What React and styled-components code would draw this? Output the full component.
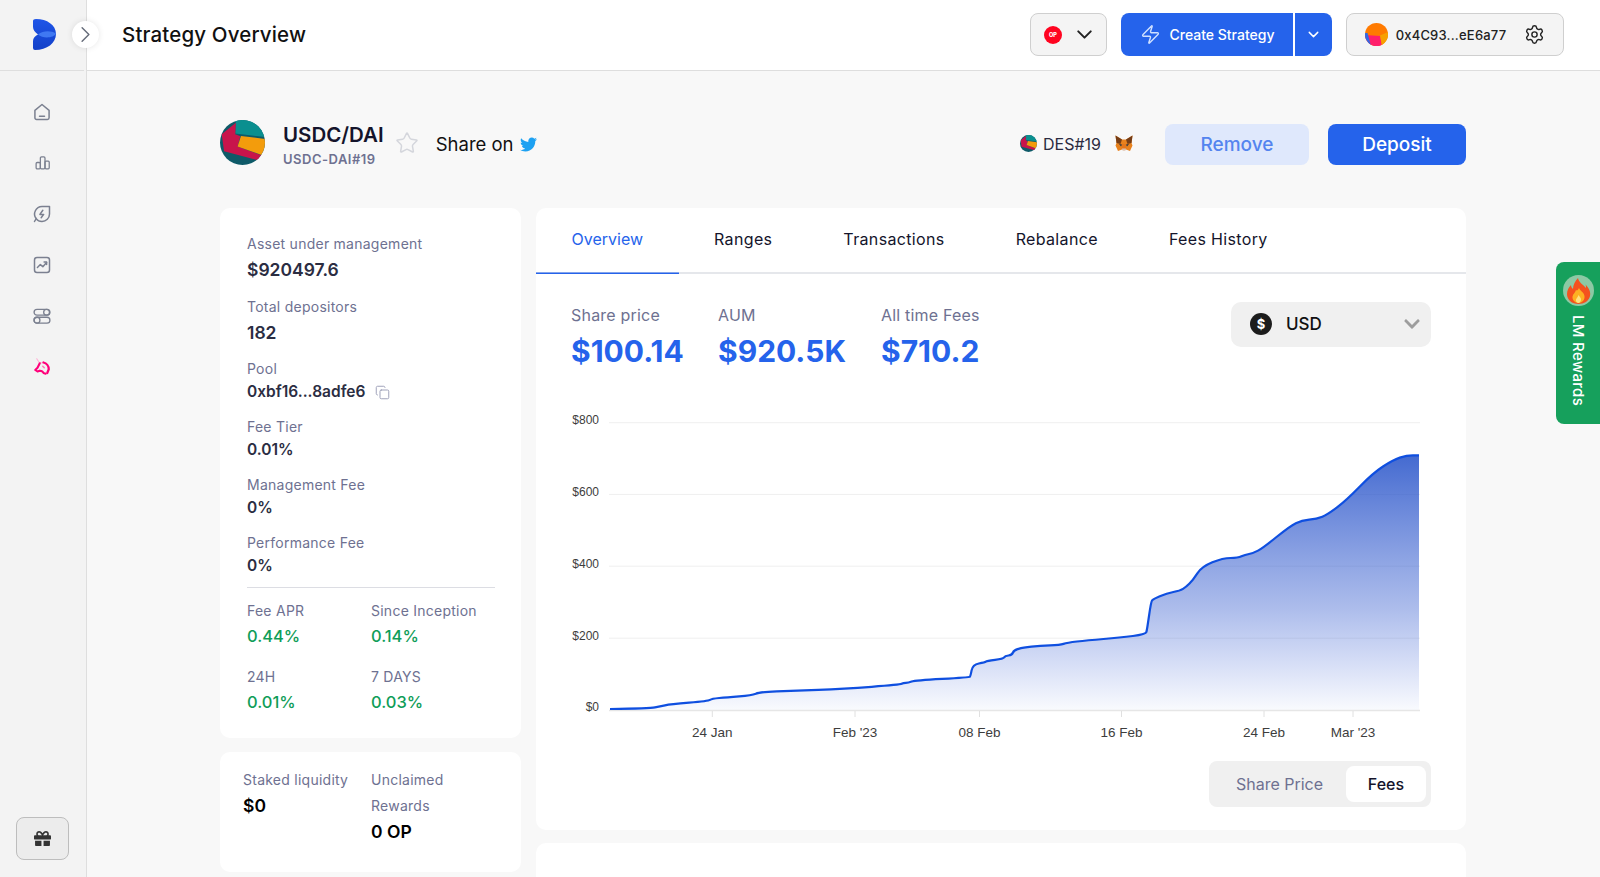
import React from 'react';
import styled, { createGlobalStyle } from 'styled-components';
import { ChevronDown, ChevronRight, Copy, Settings, Star, Zap } from 'lucide-react';
import { FaChevronDown, FaGift, FaTwitter } from 'react-icons/fa';

const GlobalStyle = createGlobalStyle`
  html, body { margin: 0; padding: 0; height: 100%; overflow: hidden; }
  body { font-family: Inter, "Noto Sans", sans-serif; background: #f8f8f8; color: #14142b; }
  * { box-sizing: border-box; }
`;

const Shell = styled.div`
  display: flex;
  height: 877px;
  overflow: hidden;
`;

const Sidebar = styled.aside`
  width: 87px;
  flex: none;
  display: flex;
  flex-direction: column;
  align-items: center;
  background: #f3f3f3;
  border-right: 1px solid #dedede;
  padding: 0 2px 17px 0;
`;

const LogoBox = styled.div`
  width: 100%;
  height: 71px;
  flex: none;
  display: flex;
  align-items: center;
  padding: 0 0 1px 33px;
  border-bottom: 1px solid #dedede;
`;

const Nav = styled.nav`
  display: flex;
  flex-direction: column;
  padding-top: 15px;
  flex: 1;
`;

const NavItem = styled.a`
  width: 40px;
  height: 51px;
  display: flex;
  align-items: center;
  justify-content: center;
  color: #7b8090;
`;

const GiftButton = styled.button`
  width: 53px;
  height: 43px;
  display: flex;
  align-items: center;
  justify-content: center;
  background: #ececec;
  border: 1px solid #bdbdbd;
  border-radius: 8px;
  color: #333;
  font-size: 17px;
  padding: 0;
`;

const Main = styled.div`
  flex: 1;
  min-width: 0;
  display: flex;
  flex-direction: column;
`;

const Header = styled.header`
  position: relative;
  height: 71px;
  flex: none;
  display: flex;
  align-items: center;
  background: #fff;
  border-bottom: 1px solid #dedede;
  padding: 0 36px 1px 36px;
  gap: 14px;
`;

const Collapse = styled.button`
  position: absolute;
  left: -15px;
  top: 21px;
  width: 27px;
  height: 27px;
  display: flex;
  align-items: center;
  justify-content: center;
  border: 0;
  padding: 0;
  border-radius: 50%;
  background: #fff;
  color: #666c7a;
  box-shadow: 0 0 6px rgba(0, 0, 0, 0.1);
`;

const PageTitle = styled.h1`
  margin: 0 auto 0 -1px;
  font-size: 20.5px;
  font-weight: 500;
  color: #111;
  letter-spacing: 0.15px;
`;

const GreyButton = styled.div`
  height: 43px;
  width: ${p => p.$width}px;
  display: flex;
  align-items: center;
  justify-content: space-between;
  padding: ${p => p.$padding};
  background: #f4f4f4;
  border: 1.5px solid #cfcfcf;
  border-radius: 8px;
  font-size: 13px;
  font-weight: 500;
  color: #222;
  letter-spacing: 0.2px;
`;

const WalletText = styled.span`
  margin-right: 10px;
`;

const SplitButton = styled.div`
  display: flex;
  gap: 2px;
`;

const BlueButton = styled.button`
  height: 43px;
  width: ${p => p.$width}px;
  display: flex;
  align-items: center;
  justify-content: center;
  gap: 9px;
  border: 0;
  padding: 0;
  background: #2563eb;
  color: #fff;
  font-family: inherit;
  font-size: 14px;
  font-weight: 500;
  border-radius: ${p => p.$radius};
`;

const OpBadge = styled.span`
  width: 18px;
  height: 18px;
  border-radius: 50%;
  background: #ff0420;
  color: #fff;
  font-size: 5.5px;
  font-weight: 800;
  display: flex;
  align-items: center;
  justify-content: center;
`;

const Content = styled.main`
  flex: 1;
  min-height: 0;
  padding: 48px 134px 0 133px;
`;

const TitleRow = styled.section`
  height: 46px;
  margin-bottom: 43px;
  display: flex;
  align-items: center;
`;

const PairName = styled.div`
  margin-left: 18px;
  display: flex;
  flex-direction: column;
  padding-top: 4px;
`;

const PairTitle = styled.div`
  font-size: 20.5px;
  font-weight: 600;
  line-height: 30px;
  color: #14142b;
`;

const PairSub = styled.div`
  font-size: 13px;
  font-weight: 600;
  line-height: 18px;
  letter-spacing: 0.5px;
  color: #6e7191;
`;

const ShareText = styled.span`
  display: flex;
  align-items: center;
  gap: 6px;
  margin: 4px auto 0 17px;
  font-size: 18.5px;
  color: #111;
  svg { color: #1da1f2; }
`;

const FavStar = styled.span`
  display: flex;
  margin: 2px 0 0 11px;
  color: #d4d6dc;
`;

const VaultTag = styled.span`
  display: flex;
  align-items: center;
  gap: 6px;
  margin: 3px 32px 0 0;
  font-size: 16px;
  color: #2b2b40;
`;

const FoxSlot = styled.span`
  display: flex;
  margin-left: 8px;
`;

const ActionButton = styled.button`
  width: ${p => p.$width}px;
  height: 41px;
  margin: 4px 0 0 ${p => p.$left || 0}px;
  border: 0;
  border-radius: 8px;
  font-family: inherit;
  font-size: 19px;
  font-weight: 500;
  background: ${p => (p.$primary ? '#2563eb' : '#dfe8fc')};
  color: ${p => (p.$primary ? '#fff' : '#5484ef')};
`;

const Columns = styled.div`
  display: grid;
  grid-template-columns: 301px 930px;
  column-gap: 15px;
  align-items: start;
`;

const Stack = styled.div`
  display: flex;
  flex-direction: column;
  gap: ${p => p.$gap}px;
`;

const Card = styled.div`
  background: #fff;
  border-radius: 10px;
`;

const InfoCard = styled(Card)`
  height: 530px;
  padding: 26px 26px 0 27px;
`;

const Stat = styled.div`
  margin-bottom: ${p => p.$after}px;
`;

const Label = styled.div`
  font-size: 14px;
  line-height: 20px;
  color: #6e7191;
  letter-spacing: 0.25px;
`;

const Value = styled.div`
  display: flex;
  align-items: center;
  gap: 10px;
  font-size: ${p => p.$size}px;
  line-height: ${p => p.$line}px;
  font-weight: 600;
  color: #2b2d42;
  svg { color: #9a9db5; }
`;

const Divider = styled.hr`
  margin: 9px 0 13px;
  border: 0;
  border-top: 1px solid #dcdde3;
`;

const ReturnGrid = styled.div`
  display: grid;
  grid-template-columns: 124px 1fr;
  row-gap: 16px;
`;

const GreenValue = styled.div`
  font-size: 16.5px;
  line-height: 30px;
  font-weight: 500;
  color: #0f9d58;
`;

const StakeCard = styled(Card)`
  height: 120px;
  padding: 15px 0 0 23px;
  display: grid;
  grid-template-columns: 128px 110px;
  align-items: start;
`;

const StakeLabel = styled(Label)`
  line-height: 26px;
`;

const StakeValue = styled.div`
  font-size: 17.5px;
  font-weight: 600;
  line-height: 26px;
  color: #000;
`;

const TabBar = styled.div`
  height: 66px;
  display: flex;
  border-bottom: 2px solid #e5e7eb;
`;

const Tab = styled.div`
  height: 66px;
  padding: 0 35.5px 5px;
  display: flex;
  align-items: center;
  font-size: 16px;
  letter-spacing: ${p => (p.$active ? '0' : '0.35px')};
  color: ${p => (p.$active ? '#2563eb' : '#14142b')};
  box-shadow: ${p => (p.$active ? 'inset 0 -1.5px 0 #2563eb' : 'none')};
`;

const SummaryRow = styled.div`
  height: 126px;
  padding: 28px 35px 0 35px;
  display: flex;
  align-items: flex-start;
`;

const Summary = styled.div`
  width: ${p => p.$width}px;
`;

const SummaryLabel = styled.div`
  font-size: 16px;
  line-height: 26px;
  letter-spacing: 0.2px;
  color: #6e7191;
`;

const SummaryValue = styled.div`
  font-size: 30px;
  line-height: 46px;
  font-weight: 700;
  color: #2563eb;
`;

const CurrencySelect = styled.div`
  margin-left: auto;
  width: 200px;
  height: 45px;
  display: flex;
  align-items: center;
  gap: 14px;
  padding: 0 10px 2px 19px;
  background: #f0f0f0;
  border-radius: 10px;
  font-size: 17px;
  font-weight: 500;
  color: #111;
  svg { margin-left: auto; color: #9d9d9d; }
`;

const DollarCoin = styled.span`
  width: 22px;
  height: 22px;
  border-radius: 50%;
  background: #1c1c1c;
  color: #fff;
  font-size: 13px;
  font-weight: 700;
  display: flex;
  align-items: center;
  justify-content: center;
`;

const ChartSvg = styled.svg`
  display: block;
  width: 930px;
  height: 350px;
  text {
    font-family: "Liberation Sans", Arial, sans-serif;
    fill: #3d3d3d;
  }
`;

const ChartToggle = styled.div`
  width: 222px;
  height: 46px;
  margin: 11px 35px 23px auto;
  padding: 5px 5px 5px 4px;
  display: flex;
  align-items: center;
  background: #f0f0f0;
  border-radius: 8px;
  font-size: 16px;
`;

const ToggleOption = styled.div`
  height: 36px;
  flex: ${p => (p.$active ? '0 0 80px' : '1')};
  display: flex;
  align-items: center;
  justify-content: center;
  border-radius: 8px;
  font-weight: ${p => (p.$active ? 500 : 400)};
  background: ${p => (p.$active ? '#fff' : 'transparent')};
  color: ${p => (p.$active ? '#14142b' : '#6e7191')};
`;

const LowerCard = styled(Card)`
  height: 200px;
`;

const RewardsTab = styled.div`
  position: fixed;
  right: 0;
  top: 262px;
  width: 44px;
  height: 162px;
  display: flex;
  flex-direction: column;
  align-items: center;
  gap: 9px;
  padding-top: 13px;
  background: #16a05c;
  border-radius: 8px 0 0 8px;
  color: #fff;
  font-size: 15px;
  font-weight: 500;
`;

const FlameBadge = styled.span`
  width: 31px;
  height: 31px;
  border-radius: 50%;
  background: #8cc9a4;
  display: flex;
  align-items: center;
  justify-content: center;
`;

const RewardsText = styled.span`
  writing-mode: vertical-rl;
  white-space: nowrap;
  letter-spacing: 0.3px;
`;

const Logo = () => (
  <svg width="23" height="31" viewBox="0 0 23 31">
    <defs>
      <linearGradient id="logoGrad" x1="0" y1="0" x2="0" y2="1">
        <stop offset="0" stopColor="#1f55e8" />
        <stop offset="1" stopColor="#1240c8" />
      </linearGradient>
    </defs>
    <path d="M0 2Q0 0 3 0C14 0 23 6 23 15C23 24 14 31 2 31Q0 31 0 29L0 22C0 19 2 17 5 15.500C2 13 0 11 0 8Z" fill="url(#logoGrad)" />
    <path d="M5 15.500C10 11.500 18 11.500 23 14.500C21 19 10 20 5 15.500Z" fill="#3f78f2" />
  </svg>
);

const Line = ({ children, size = 18, width = 1.8 }) => (
  <svg width={size} height={size} viewBox="0 0 24 24" fill="none" stroke="currentColor" strokeWidth={width} strokeLinecap="round" strokeLinejoin="round">
    {children}
  </svg>
);

const HomeIcon = () => (
  <Line size={20}>
    <path d="M3.500 10L12 3l8.500 7v9a2 2 0 0 1-2 2h-13a2 2 0 0 1-2-2z" />
    <path d="M9 17h6" />
  </Line>
);

const BarsIcon = () => (
  <Line size={17}>
    <rect x="3" y="12" width="6" height="9" rx="1.500" />
    <rect x="9" y="4" width="6.500" height="17" rx="1.500" />
    <rect x="15.500" y="10" width="6" height="11" rx="1.500" />
  </Line>
);

const LeafIcon = () => (
  <Line size={20}>
    <path d="M21 3h-9a9 9 0 0 0-7 14.500 8.500 8.500 0 0 0 7 3.500 9 9 0 0 0 9-9z" />
    <path d="M13 7.500L9.500 12.500h4.500L11 16.500" />
    <path d="M5 17.500L3 21" />
  </Line>
);

const TrendIcon = () => (
  <Line size={20}>
    <rect x="3" y="3" width="18" height="18" rx="3" />
    <path d="M6.500 15l3.500-3.500 3 2.500 4.500-5" />
    <path d="M14.500 8.500h3v3" />
  </Line>
);

const TogglesIcon = () => (
  <Line size={20} width={1.6}>
    <rect x="2.500" y="4" width="19" height="7" rx="3.500" />
    <rect x="2.500" y="13.500" width="19" height="7" rx="3.500" />
    <circle cx="17.500" cy="7.500" r="3.500" />
    <circle cx="6" cy="17" r="3.500" />
  </Line>
);

const UnicornIcon = () => (
  <svg width="18" height="18" viewBox="0 0 24 24" fill="none" strokeLinecap="round" strokeLinejoin="round">
    <path d="M5 1l4 6 5-1" stroke="#ffb3d6" strokeWidth="1.500" />
    <path d="M9 7L6 13 3 16l3 2 3-1" stroke="#ff007a" strokeWidth="2.800" />
    <path d="M14 6c4 1 7 5 7 9l-2 5" stroke="#ff007a" strokeWidth="3" />
    <path d="M9 17c2 0 4 0 5 3l3 1" stroke="#ff007a" strokeWidth="2.600" />
    <path d="M13 11l2 2" stroke="#ff7ab8" strokeWidth="2" />
  </svg>
);

const PoolAvatar = ({ size }) => (
  <svg width={size} height={size} viewBox="0 0 133 133">
    <defs>
      <clipPath id={`pool${size}`}>
        <circle cx="66.500" cy="66.500" r="66.500" />
      </clipPath>
    </defs>
    <g clipPath={`url(#pool${size})`}>
      <rect width="133" height="133" fill="#0e5a68" />
      <polygon points="47,0 133,0 133,50 45,40" fill="#0a8f8f" />
      <polygon points="5,42 47,8 45,42 60,48 52,78 122,104 116,120 12,92" fill="#c8144b" />
      <polygon points="62,47 133,56 133,107 52,78" fill="#f39c0c" />
    </g>
  </svg>
);

const WalletAvatar = () => (
  <svg width="23" height="23" viewBox="0 0 46 46">
    <defs>
      <clipPath id="wallet">
        <circle cx="23" cy="23" r="23" />
      </clipPath>
    </defs>
    <g clipPath="url(#wallet)">
      <rect width="46" height="46" fill="#ff7a00" />
      <polygon points="0,24 30,26 34,46 0,46" fill="#ff1f6b" />
      <polygon points="30,25 46,18 46,46 34,46" fill="#f7a000" />
      <polygon points="0,20 5,20 12,46 0,46" fill="#2e6be6" />
    </g>
  </svg>
);

const FoxIcon = () => (
  <svg width="18" height="17" viewBox="0 0 36 34">
    <polygon points="1,1 14,9 22,9 35,1 33,16 35,21 30,32 22,29 14,29 6,32 1,21 3,16" fill="#e8821e" />
    <polygon points="1,1 14,9 11,18 3,16" fill="#763d16" />
    <polygon points="35,1 22,9 25,18 33,16" fill="#763d16" />
    <polygon points="14,18 22,18 23,27 18,31 13,27" fill="#e4761b" />
    <polygon points="14,27 22,27 21,31 15,31" fill="#d7c1b3" />
    <polygon points="8,18 14,19 12,23" fill="#233447" />
    <polygon points="28,18 22,19 24,23" fill="#233447" />
  </svg>
);

const Flame = () => (
  <svg width="25" height="27" viewBox="0 0 25 27">
    <path d="M12 1C13 6 17 7 20 11C20 9 20 8 19 7C23 11 25 15 24 19C23 24 18 27 12.500 27C6 27 1 23 1 17C1 13 3 10 5 8C5 10 6 11 7 12C7 8 9 4 12 1Z" fill="#f4511e" />
    <path d="M13 11C14 14 18 15 18.500 19C19 23 16 26 12.500 26C9 26 6 23 6.500 19.500C7 17 9 16 10 13C11 14 12 13 13 11Z" fill="#fdb022" />
    <path d="M12.500 18C13.500 20 15.500 21 15 23C14.500 25 13.500 26 12.500 26C11 26 9.500 24.500 10 22.500C10.500 21 12 20 12.500 18Z" fill="#ffe082" />
  </svg>
);

// curve traced from the fee series, in page coordinates
const curve = [
  [610, 709], [650, 708.3], [660, 706.3], [670, 704.3], [708.3, 701], [711.7, 698.7], [726.7, 697.3], [751.7, 695.3],
  [760, 692], [793.3, 690.7], [843.3, 689], [900, 684.7], [903.3, 683], [908.3, 682.7], [915, 680.3], [969.3, 677.3],
  [970.5, 676], [972.7, 664.7], [985, 662.3], [986.7, 661], [1003.3, 658.7], [1005, 656], [1012, 655], [1014, 650],
  [1023, 647.7], [1040, 645.7], [1060, 645], [1067, 642.7], [1087, 640.3], [1120, 637.7], [1145.7, 634.3], [1147, 630],
  [1151, 602], [1153, 599], [1166.7, 593.3], [1180, 590.7], [1186, 587], [1193, 580], [1201.7, 566.7], [1223, 558],
  [1238, 558], [1245, 554.7], [1253, 553.3], [1263, 548], [1290, 526], [1301.7, 520.3], [1316.7, 519], [1328, 514.3],
  [1346.7, 500], [1373, 473], [1393, 460], [1406.7, 455.3], [1419, 455.3],
];

const smoothPath = pts => {
  let d = `M${pts[0][0]} ${pts[0][1]}`;
  for (let i = 1; i < pts.length - 1; i++) {
    const mx = (pts[i][0] + pts[i + 1][0]) / 2;
    const my = (pts[i][1] + pts[i + 1][1]) / 2;
    d += `Q${pts[i][0]} ${pts[i][1]} ${mx} ${my}`;
  }
  const last = pts[pts.length - 1];
  return `${d}L${last[0]} ${last[1]}`;
};

const linePath = smoothPath(curve);
const gridLines = [
  { y: 422.7, label: '$800' },
  { y: 494.4, label: '$600' },
  { y: 566.2, label: '$400' },
  { y: 638.2, label: '$200' },
];
const xTicks = [
  { x: 712.3, label: '24 Jan' },
  { x: 855, label: "Feb '23" },
  { x: 979.5, label: '08 Feb' },
  { x: 1121.5, label: '16 Feb' },
  { x: 1264, label: '24 Feb' },
  { x: 1353, label: "Mar '23" },
];

const FeesChart = () => (
  <ChartSvg viewBox="536 400 930 350">
    <defs>
      <linearGradient id="feeFill" x1="0" y1="455" x2="0" y2="710" gradientUnits="userSpaceOnUse">
        <stop offset="0" stopColor="#2350c8" stopOpacity="0.85" />
        <stop offset="0.6" stopColor="#3a60d0" stopOpacity="0.42" />
        <stop offset="1" stopColor="#3a60d8" stopOpacity="0.03" />
      </linearGradient>
    </defs>
    {gridLines.map(g => (
      <g key={g.label}>
        <line x1="609" x2="1420" y1={g.y} y2={g.y} stroke="#efefef" strokeWidth="1" />
        <text x="599" y={g.y + 1.5} fontSize="12" textAnchor="end">{g.label}</text>
      </g>
    ))}
    <text x="599" y="711" fontSize="12" textAnchor="end">$0</text>
    <path d={`${linePath}L1419 710L610 710Z`} fill="url(#feeFill)" />
    <line x1="609" x2="1420" y1="710.5" y2="710.5" stroke="#e6e6e6" strokeWidth="1.500" />
    {xTicks.map(t => (
      <g key={t.label}>
        <line x1={t.x} x2={t.x} y1="711" y2="717" stroke="#e0e0e0" strokeWidth="1" />
        <text x={t.x} y="737" fontSize="13.500" textAnchor="middle">{t.label}</text>
      </g>
    ))}
    <path d={linePath} fill="none" stroke="#0f4fe0" strokeWidth="2.200" strokeLinejoin="round" />
  </ChartSvg>
);

const App = () => (
  <>
    <GlobalStyle />
    <Shell>
      <Sidebar>
        <LogoBox><Logo /></LogoBox>
        <Nav>
          <NavItem><HomeIcon /></NavItem>
          <NavItem><BarsIcon /></NavItem>
          <NavItem><LeafIcon /></NavItem>
          <NavItem><TrendIcon /></NavItem>
          <NavItem><TogglesIcon /></NavItem>
          <NavItem><UnicornIcon /></NavItem>
        </Nav>
        <GiftButton><FaGift /></GiftButton>
      </Sidebar>
      <Main>
        <Header>
          <Collapse><ChevronRight size={27} strokeWidth={1.3} /></Collapse>
          <PageTitle>Strategy Overview</PageTitle>
          <GreyButton $width={77} $padding="0 9px 0 13px">
            <OpBadge>OP</OpBadge>
            <ChevronDown size={25} strokeWidth={1.9} />
          </GreyButton>
          <SplitButton>
            <BlueButton $width={172} $radius="8px 0 0 8px">
              <Zap size={21} strokeWidth={1.6} color="#cfe0ff" />
              Create Strategy
            </BlueButton>
            <BlueButton $width={37} $radius="0 8px 8px 0">
              <ChevronDown size={17} strokeWidth={2} />
            </BlueButton>
          </SplitButton>
          <GreyButton $width={218} $padding="0 18px 0 18px">
            <WalletAvatar />
            <WalletText>0x4C93...eE6a77</WalletText>
            <Settings size={21} strokeWidth={1.6} />
          </GreyButton>
        </Header>
        <Content>
          <TitleRow>
            <PoolAvatar size={45} />
            <PairName>
              <PairTitle>USDC/DAI</PairTitle>
              <PairSub>USDC-DAI#19</PairSub>
            </PairName>
            <FavStar><Star size={24} strokeWidth={1.5} /></FavStar>
            <ShareText>Share on <FaTwitter size={17} /></ShareText>
            <VaultTag>
              <PoolAvatar size={17} />
              DES#19
              <FoxSlot><FoxIcon /></FoxSlot>
            </VaultTag>
            <ActionButton $width={144}>Remove</ActionButton>
            <ActionButton $width={138} $left={19} $primary>Deposit</ActionButton>
          </TitleRow>
          <Columns>
            <Stack $gap={14}>
              <InfoCard>
                <Stat $after={12}>
                  <Label>Asset under management</Label>
                  <Value $size={17.5} $line={31}>$920497.6</Value>
                </Stat>
                <Stat $after={11}>
                  <Label>Total depositors</Label>
                  <Value $size={17.5} $line={31}>182</Value>
                </Stat>
                <Stat $after={12}>
                  <Label>Pool</Label>
                  <Value $size={15.5} $line={26}>0xbf16...8adfe6 <Copy size={15} strokeWidth={1.5} /></Value>
                </Stat>
                <Stat $after={13}>
                  <Label>Fee Tier</Label>
                  <Value $size={15.5} $line={25}>0.01%</Value>
                </Stat>
                <Stat $after={13}>
                  <Label>Management Fee</Label>
                  <Value $size={15.5} $line={25}>0%</Value>
                </Stat>
                <Stat $after={0}>
                  <Label>Performance Fee</Label>
                  <Value $size={15.5} $line={25}>0%</Value>
                </Stat>
                <Divider />
                <ReturnGrid>
                  <div><Label>Fee APR</Label><GreenValue>0.44%</GreenValue></div>
                  <div><Label>Since Inception</Label><GreenValue>0.14%</GreenValue></div>
                  <div><Label>24H</Label><GreenValue>0.01%</GreenValue></div>
                  <div><Label>7 DAYS</Label><GreenValue>0.03%</GreenValue></div>
                </ReturnGrid>
              </InfoCard>
              <StakeCard>
                <div>
                  <StakeLabel>Staked liquidity</StakeLabel>
                  <StakeValue>$0</StakeValue>
                </div>
                <div>
                  <StakeLabel>Unclaimed Rewards</StakeLabel>
                  <StakeValue>0 OP</StakeValue>
                </div>
              </StakeCard>
            </Stack>
            <Stack $gap={13}>
              <Card>
                <TabBar>
                  <Tab $active>Overview</Tab>
                  <Tab>Ranges</Tab>
                  <Tab>Transactions</Tab>
                  <Tab>Rebalance</Tab>
                  <Tab>Fees History</Tab>
                </TabBar>
                <SummaryRow>
                  <Summary $width={147}>
                    <SummaryLabel>Share price</SummaryLabel>
                    <SummaryValue>$100.14</SummaryValue>
                  </Summary>
                  <Summary $width={163}>
                    <SummaryLabel>AUM</SummaryLabel>
                    <SummaryValue>$920.5K</SummaryValue>
                  </Summary>
                  <Summary $width={120}>
                    <SummaryLabel>All time Fees</SummaryLabel>
                    <SummaryValue>$710.2</SummaryValue>
                  </Summary>
                  <CurrencySelect>
                    <DollarCoin>$</DollarCoin>
                    USD
                    <FaChevronDown size={18} />
                  </CurrencySelect>
                </SummaryRow>
                <FeesChart />
                <ChartToggle>
                  <ToggleOption>Share Price</ToggleOption>
                  <ToggleOption $active>Fees</ToggleOption>
                </ChartToggle>
              </Card>
              <LowerCard />
            </Stack>
          </Columns>
        </Content>
      </Main>
    </Shell>
    <RewardsTab>
      <FlameBadge><Flame /></FlameBadge>
      <RewardsText>LM Rewards</RewardsText>
    </RewardsTab>
  </>
);

export default App;
